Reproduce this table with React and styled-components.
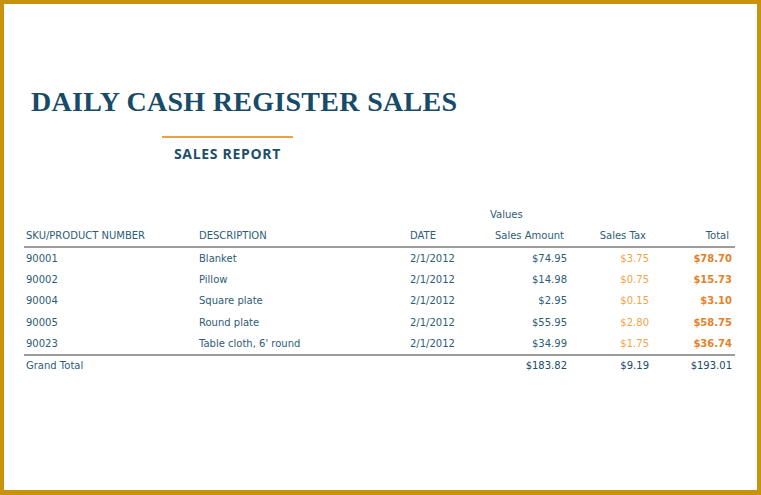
import React from "react";
import styled, { createGlobalStyle, css } from "styled-components";

const GlobalStyle = createGlobalStyle`
    html, body {
        margin: 0;
        padding: 0;
        background: #fff;
    }
`;

const Frame = styled.div`
    box-sizing: border-box;
    width: 761px;
    height: 495px;
    border: 4px solid #c8920d;
    border-bottom-width: 5px;
    background: #fff;
    padding: 82px 25px 0 20px;
`;

const Title = styled.h1`
    margin: 0 0 0 7px;
    font-family: "Liberation Serif", "Times New Roman", serif;
    font-weight: 700;
    font-size: 28px;
    line-height: 32px;
    letter-spacing: 0.3px;
    color: #174b68;
`;

const SubHeader = styled.div`
    width: 131px;
    margin: 18px 0 0 138px;
    display: flex;
    flex-direction: column;
    align-items: center;
`;

const Rule = styled.div`
    width: 100%;
    height: 2px;
    background: #f0a044;
`;

const SubTitle = styled.h2`
    margin: 9px 0 0;
    font-family: "Open Sans", "Liberation Sans", sans-serif;
    font-weight: 700;
    font-size: 14px;
    line-height: 14px;
    letter-spacing: 0.7px;
    color: #1d4e6a;
`;

const Table = styled.table`
    width: 711px;
    margin-top: 43px;
    border-collapse: collapse;
    table-layout: fixed;
    font-family: "DejaVu Sans", Verdana, sans-serif;
    font-size: 10px;
    color: #2d5d75;
`;

const Row = styled.tr`
    height: 21.5px;
    ${(p) =>
        p.$ruled &&
        css`
            border-bottom: 2px solid #9c9c9c;
        `}
    ${(p) =>
        p.$top &&
        css`
            border-top: 2px solid #9c9c9c;
        `}
`;

const Cell = styled.td`
    padding: 0 ${(p) => (p.$right ? "3px" : "0")} 0 2px;
    text-align: ${(p) => (p.$right ? "right" : "left")};
    vertical-align: middle;
    white-space: nowrap;
    font-weight: ${(p) => (p.$bold ? 700 : 400)};
    color: ${(p) =>
        p.$tone === "tax"
            ? "#f2a348"
            : p.$tone === "total"
            ? "#e4822a"
            : p.$tone === "grand"
            ? "#184a64"
            : "inherit"};
`;

const Head = styled(Cell).attrs({ as: "th" })`
    font-weight: 400;
    ${(p) =>
        p.$right &&
        css`
            padding-right: 6px;
        `}
`;

const ValuesLabel = styled.th`
    font-weight: 400;
    text-align: left;
    padding-left: 22px;
`;

const rows = [
    ["90001", "Blanket", "$74.95", "$3.75", "$78.70"],
    ["90002", "Pillow", "$14.98", "$0.75", "$15.73"],
    ["90004", "Square plate", "$2.95", "$0.15", "$3.10"],
    ["90005", "Round plate", "$55.95", "$2.80", "$58.75"],
    ["90023", "Table cloth, 6' round", "$34.99", "$1.75", "$36.74"],
];

export default function App() {
    return (
        <>
            <GlobalStyle />
            <Frame>
                <Title>DAILY CASH REGISTER SALES</Title>
                <SubHeader>
                    <Rule />
                    <SubTitle>SALES REPORT</SubTitle>
                </SubHeader>
                <Table>
                    <colgroup>
                        <col style={{ width: 173 }} />
                        <col style={{ width: 211 }} />
                        <col style={{ width: 60 }} />
                        <col style={{ width: 102 }} />
                        <col style={{ width: 82 }} />
                        <col style={{ width: 83 }} />
                    </colgroup>
                    <thead>
                        <Row>
                            <th />
                            <th />
                            <th />
                            <ValuesLabel>Values</ValuesLabel>
                            <th />
                            <th />
                        </Row>
                        <Row $ruled>
                            <Head>SKU/PRODUCT NUMBER</Head>
                            <Head>DESCRIPTION</Head>
                            <Head>DATE</Head>
                            <Head $right>Sales Amount</Head>
                            <Head $right>Sales Tax</Head>
                            <Head $right>Total</Head>
                        </Row>
                    </thead>
                    <tbody>
                        {rows.map(([sku, desc, amt, tax, total]) => (
                            <Row key={sku}>
                                <Cell>{sku}</Cell>
                                <Cell>{desc}</Cell>
                                <Cell>2/1/2012</Cell>
                                <Cell $right>{amt}</Cell>
                                <Cell $right $tone="tax">{tax}</Cell>
                                <Cell $right $bold $tone="total">{total}</Cell>
                            </Row>
                        ))}
                        <Row $top>
                            <Cell>Grand Total</Cell>
                            <Cell />
                            <Cell />
                            <Cell $right $tone="grand">$183.82</Cell>
                            <Cell $right $tone="grand">$9.19</Cell>
                            <Cell $right $tone="grand">$193.01</Cell>
                        </Row>
                    </tbody>
                </Table>
            </Frame>
        </>
    );
}
